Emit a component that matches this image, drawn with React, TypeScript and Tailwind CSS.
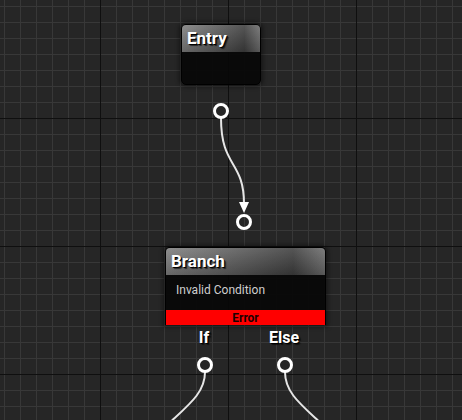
import React from 'react';

const headerBg =
  'bg-[linear-gradient(to_bottom,rgba(255,255,255,0.12),rgba(0,0,0,0.18)),linear-gradient(to_right,#7e7e7e,#5a5a5a_45%,#3e3e3e_80%,#6c6c6c)]';

const titleText =
  'font-bold text-white leading-none [text-shadow:1px_1px_0_#000,2px_2px_1px_rgba(0,0,0,0.6)]';

const Pin = ({ x, y }: { x: number; y: number }) => (
  <circle cx={x} cy={y} r={6.5} fill="none" stroke="#ffffff" strokeWidth={3} />
);

export default function App() {
  return (
    <div className="relative w-[462px] h-[420px] overflow-hidden bg-[#262626] font-['Roboto',sans-serif]">
      {/* grid */}
      <div className="absolute inset-0 bg-[linear-gradient(to_right,#0f0f0f_1px,transparent_1px),linear-gradient(to_bottom,#0f0f0f_1px,transparent_1px),linear-gradient(to_right,#383838_1px,transparent_1px),linear-gradient(to_bottom,#383838_1px,transparent_1px)] bg-[size:128px_128px,128px_128px,16px_16px,16px_16px] bg-[position:100px_118px]" />

      {/* wires */}
      <svg className="absolute inset-0" width={462} height={420}>
        <path d="M221 118 C221 168, 244 160, 244 204" fill="none" stroke="#e6e6e6" strokeWidth={2} />
        <polygon points="239,202 249,202 244,213" fill="#ffffff" />
        <path d="M205 372 C205 398, 180 410, 150 442" fill="none" stroke="#e6e6e6" strokeWidth={2} />
        <path d="M285 372 C285 398, 310 410, 340 442" fill="none" stroke="#e6e6e6" strokeWidth={2} />
        <Pin x={221} y={111} />
        <Pin x={244} y={222} />
        <Pin x={205} y={365} />
        <Pin x={285} y={365} />
      </svg>

      {/* Entry node */}
      <div className="absolute left-[181px] top-[24px] w-[80px] h-[61px] rounded-[5px] border border-black bg-[#070707]/95 overflow-hidden shadow-[0_0_4px_2px_rgba(0,0,0,0.45)]">
        <div className={`h-[27px] px-[5px] flex items-center ${headerBg}`}>
          <span className={`text-[17px] ${titleText}`}>Entry</span>
        </div>
      </div>

      {/* Branch node */}
      <div className="absolute left-[165px] top-[247px] w-[161px] flex flex-col rounded-t-[5px] border-x border-t border-black bg-[#070707]/95 overflow-hidden shadow-[0_0_4px_2px_rgba(0,0,0,0.45)]">
        <div className={`h-[27px] px-[5px] flex items-center ${headerBg}`}>
          <span className={`text-[17px] ${titleText}`}>Branch</span>
        </div>
        <div className="h-[35px] pl-[10px] pt-[8px] text-[12px] text-[#cfcfcf] leading-[14px]">
          Invalid Condition
        </div>
        <div className="h-[15px] bg-[#ff0000] flex items-center justify-center text-[12px] font-bold text-[#1a0000] leading-none">
          Error
        </div>
      </div>

      {/* output labels */}
      <div className="absolute left-[164px] top-[330px] w-[160px] flex">
        <div className="w-[80px] text-center leading-none">
          <span className={`text-[16px] ${titleText}`}>If</span>
        </div>
        <div className="w-[80px] text-center leading-none">
          <span className={`text-[16px] ${titleText}`}>Else</span>
        </div>
      </div>
    </div>
  );
}
